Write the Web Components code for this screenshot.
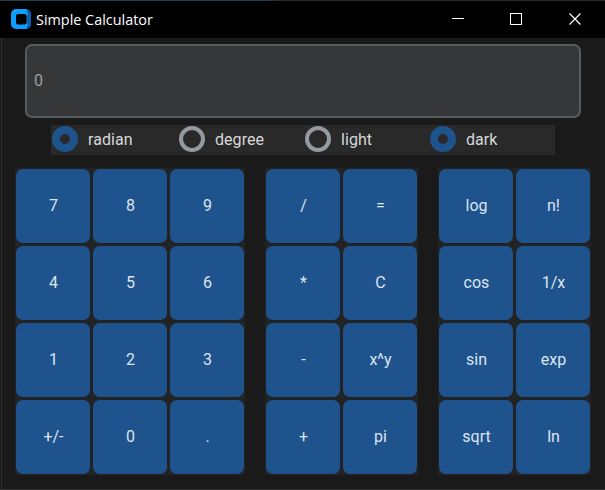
<!DOCTYPE html>
<html lang="en">
<head>
<meta charset="utf-8">
<title>Simple Calculator</title>
<style>
html,body{margin:0;width:605px;height:490px;overflow:hidden;background:#1a1a1a}
</style>
</head>
<body>
<calc-app></calc-app>
<script>
class Base extends HTMLElement{
  constructor(){super();this.attachShadow({mode:'open'});}
  connectedCallback(){this.shadowRoot.innerHTML=this.render();}
}
customElements.define('title-bar',class extends Base{
  render(){return `<style>
  :host{display:flex;box-sizing:border-box;height:38px;background:#000;border-top:1px solid;border-image:linear-gradient(90deg,#24404f 0,#24404f 44%,#2b2b2b 46%,#2b2b2b 100%) 1;color:#fff;font:14.4px "Open Sans","Noto Sans",sans-serif;padding:0 0 1px 11px;align-items:center}
  .logo{width:20px;height:20px;flex:none}
  .t{margin-left:5px;flex:1;white-space:nowrap;line-height:20px;padding-top:2px}
  .c{width:58px;display:flex;justify-content:center;flex:none}
  .c svg{display:block}
  </style>
  <svg class="logo" viewBox="0 0 20 20"><path fill="#0a63b0" d="M12 0h3a5 5 0 0 1 5 5v10a5 5 0 0 1-5 5h-3z"/><path fill="#109cff" fill-rule="evenodd" d="M5 0h9.500q1.500 0 1.500 1.500V3l1 2.500-1.500 1.500V14l1.500 1.500-1 2v1q0 1.500-1.500 1.500H5a5 5 0 0 1-5-5V5a5 5 0 0 1 5-5z"/><rect x="5" y="5" width="10.500" height="10.500" rx="2" fill="#000"/></svg>
  <span class="t"><slot></slot></span>
  <span class="c"><svg width="12" height="12"><path d="M0 5.500h12" stroke="#fff"/></svg></span>
  <span class="c"><svg width="12" height="12"><rect x=".5" y=".5" width="11" height="11" fill="none" stroke="#fff"/></svg></span>
  <span class="c" style="width:60px"><svg width="12" height="12"><path d="M.5.500l11 11M11.500.500l-11 11" stroke="#fff" stroke-width="1.200"/></svg></span>`}
});
customElements.define('calc-display',class extends Base{
  render(){return `<style>:host{display:flex;align-items:center;box-sizing:border-box;width:556px;height:74px;border:2px solid #565b5e;border-radius:7px;background:#343638;color:#999fa3;font:16px Roboto,sans-serif;padding:0 7px 2px}</style><slot></slot>`}
});
customElements.define('calc-radio',class extends Base{
  render(){return `<style>:host{display:flex;align-items:center;gap:10px;font:16px Roboto,sans-serif;color:#dce4ee}
  i{box-sizing:border-box;width:26px;height:26px;border-radius:50%;border:4px solid #949a9f}
  :host([checked]) i{border:8px solid #1f538d}
  span{color:#d6d8da;letter-spacing:.05px}</style><i></i><span><slot></slot></span>`}
});
customElements.define('radio-row',class extends Base{
  render(){return `<style>:host{display:grid;grid-template-columns:127px 126px 125px 1fr;box-sizing:border-box;width:504px;height:30px;background:#292929;padding:1px 0 3px 1px}</style><slot></slot>`}
});
customElements.define('calc-key',class extends Base{
  render(){return `<style>:host{display:flex;align-items:center;justify-content:center;box-sizing:border-box;height:74px;padding:0 0 2px 1px;border-radius:7px;background:#1f538d;color:#dce4ee;font:16px Roboto,sans-serif}</style><span><slot></slot></span>`}
});
customElements.define('key-pad',class extends Base{
  render(){const n=this.getAttribute('cols');
  return `<style>:host{display:grid;grid-template-columns:repeat(${n},74px);gap:3px;padding:1px;background:#212325}</style>`+
  this.getAttribute('keys').split(' ').map(k=>`<calc-key>${k}</calc-key>`).join('')}
});
customElements.define('calc-app',class extends Base{
  render(){return `<style>
  :host{display:block;box-sizing:border-box;width:605px;height:490px;background:#1a1a1a;border-bottom:1px solid #303030}
  title-bar{width:605px}
  main{box-sizing:border-box;height:451px;margin-left:1px;border-left:1px solid #303030;padding:6px 0 0 14px;background:#1a1a1a}
  calc-display{margin-left:9px}
  radio-row{margin:7px 0 0 35px}
  .pads{display:flex;margin-top:13px;margin-left:-1px;width:576px;justify-content:space-between}
  </style>
  <title-bar>Simple Calculator</title-bar>
  <main>
  <calc-display>0</calc-display>
  <radio-row><calc-radio checked>radian</calc-radio><calc-radio>degree</calc-radio><calc-radio>light</calc-radio><calc-radio checked>dark</calc-radio></radio-row>
  <div class="pads"><key-pad cols="3" keys="7 8 9 4 5 6 1 2 3 +/- 0 ."></key-pad><key-pad cols="2" keys="/ = * C - x^y + pi"></key-pad><key-pad cols="2" keys="log n! cos 1/x sin exp sqrt ln"></key-pad></div>
  </main>`}
});
</script>
</body>
</html>
